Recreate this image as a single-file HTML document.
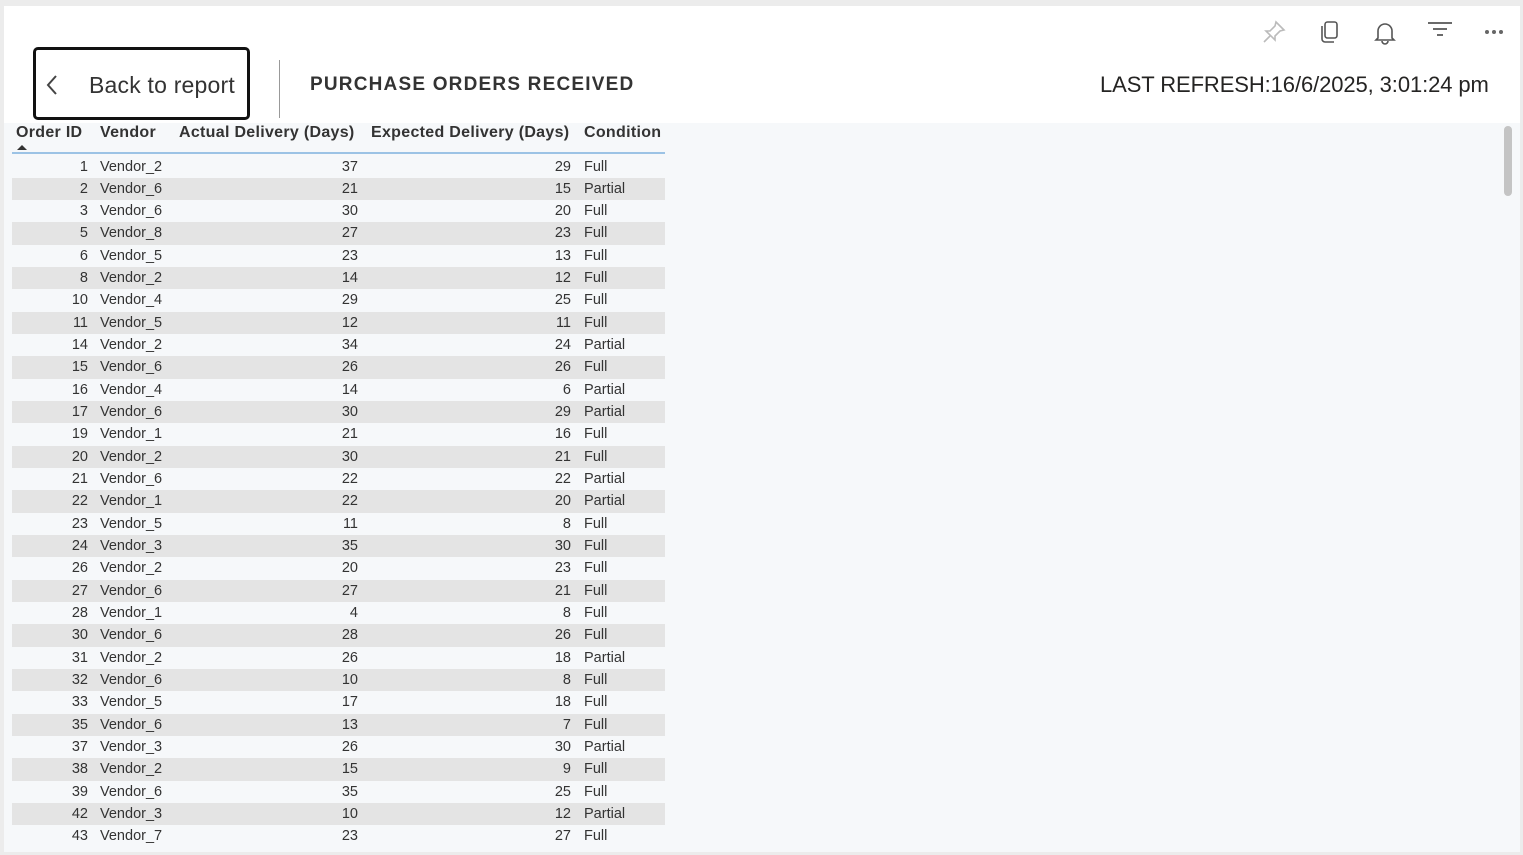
<!DOCTYPE html>
<html><head><meta charset="utf-8"><style>
*{margin:0;padding:0;box-sizing:border-box}
body{width:1523px;height:855px;background:#ececec;position:relative;overflow:hidden;font-family:"Liberation Sans",sans-serif;color:#252423}
#page{position:absolute;left:4px;top:6px;width:1516px;height:846px;background:#fff}
#tbl{position:absolute;left:4px;top:123px;width:1516px;height:729px;background:#f6f8fa}
.btn{position:absolute;left:33px;top:47px;width:217px;height:73px;border:3px solid #111;border-radius:5px;background:#fff}
.btn span{position:absolute;left:53px;top:22px;font-size:23px;color:#333;letter-spacing:0.2px}
.btn svg{position:absolute;left:9px;top:24px}
.sep{position:absolute;left:279px;top:60px;width:1px;height:58px;background:#999}
.title{position:absolute;left:310px;top:74px;font-size:19px;font-weight:bold;letter-spacing:1.2px;color:#333}
.refresh{position:absolute;left:1100px;top:72px;font-size:22px;color:#252423;letter-spacing:-0.1px}
.icons svg{position:absolute;top:18px}
.hdr{position:absolute;top:124px;font-size:16px;font-weight:bold;color:#333;white-space:nowrap;letter-spacing:0.3px}
.hline{position:absolute;left:12px;top:152px;width:653px;height:2px;background:#9cc3e5}
.row{position:absolute;left:12px;width:653px;height:22.33px;font-size:14.5px;color:#333}
.row.g{background:#e4e4e4}
.row div{position:absolute;top:3px;white-space:nowrap}
.c1{right:577px}.c2{left:88px}.c3{right:307px}.c4{right:94px}.c5{left:572px}
.scroll{position:absolute;left:1504px;top:126px;width:8px;height:70px;background:#c4c4c4;border-radius:4px}
</style></head><body>
<div id="page"></div>
<div id="tbl"></div>
<div class="btn"><svg width="14" height="22" viewBox="0 0 14 22"><path d="M11 2 L3 11 L11 20" fill="none" stroke="#444" stroke-width="2"/></svg><span>Back to report</span></div>
<div class="sep"></div>
<div class="title">PURCHASE ORDERS RECEIVED</div>
<div class="refresh">LAST REFRESH:16/6/2025, 3:01:24 pm</div>
<div class="icons">
<svg style="left:1260px" width="28" height="28" viewBox="0 0 28 28" fill="none" stroke="#bbb" stroke-width="1.6"><path d="M16 4 L24 12 L20 13 L15 18 L15 22 L6 13 L10 13 L15 8 Z"/><path d="M10 18 L4 24"/></svg>
<svg style="left:1316px" width="28" height="28" viewBox="0 0 28 28" fill="none" stroke="#555" stroke-width="1.6"><rect x="9" y="4" width="12" height="16" rx="2.5"/><path d="M6 8 V21 a3 3 0 0 0 3 3 H18"/></svg>
<svg style="left:1371px" width="28" height="28" viewBox="0 0 28 28" fill="none" stroke="#555" stroke-width="1.6"><path d="M7 20 V13 a7 7 0 0 1 14 0 V20 L23 22 H5 Z"/><path d="M11 23 a3 3 0 0 0 6 0"/></svg>
<svg style="left:1426px" width="28" height="28" viewBox="0 0 28 28" fill="none" stroke="#555" stroke-width="1.8"><path d="M2 5 H26 M7 11 H21 M11 17 H17"/></svg>
<svg style="left:1482px" width="28" height="28" viewBox="0 0 28 28" fill="#666"><circle cx="5" cy="14" r="2"/><circle cx="12" cy="14" r="2"/><circle cx="19" cy="14" r="2"/></svg>
</div>
<div class="hdr" style="left:16px">Order ID</div>
<div class="hdr" style="left:100px">Vendor</div>
<div class="hdr" style="left:179px">Actual Delivery (Days)</div>
<div class="hdr" style="left:371px">Expected Delivery (Days)</div>
<div class="hdr" style="left:584px">Condition</div>
<svg style="position:absolute;left:17px;top:145px" width="10" height="6"><path d="M0 5 L5 0 L10 5Z" fill="#333"/></svg>
<div class="hline"></div>
<div id="rows"></div>
<div class="scroll"></div>
<script>
var d=[[1,2,37,29,'Full'],[2,6,21,15,'Partial'],[3,6,30,20,'Full'],[5,8,27,23,'Full'],[6,5,23,13,'Full'],[8,2,14,12,'Full'],[10,4,29,25,'Full'],[11,5,12,11,'Full'],[14,2,34,24,'Partial'],[15,6,26,26,'Full'],[16,4,14,6,'Partial'],[17,6,30,29,'Partial'],[19,1,21,16,'Full'],[20,2,30,21,'Full'],[21,6,22,22,'Partial'],[22,1,22,20,'Partial'],[23,5,11,8,'Full'],[24,3,35,30,'Full'],[26,2,20,23,'Full'],[27,6,27,21,'Full'],[28,1,4,8,'Full'],[30,6,28,26,'Full'],[31,2,26,18,'Partial'],[32,6,10,8,'Full'],[33,5,17,18,'Full'],[35,6,13,7,'Full'],[37,3,26,30,'Partial'],[38,2,15,9,'Full'],[39,6,35,25,'Full'],[42,3,10,12,'Partial'],[43,7,23,27,'Full']];
var h='';d.forEach(function(r,i){h+='<div class="row'+(i%2?' g':'')+'" style="top:'+(155.5+i*22.33)+'px"><div class="c1">'+r[0]+'</div><div class="c2">Vendor_'+r[1]+'</div><div class="c3">'+r[2]+'</div><div class="c4">'+r[3]+'</div><div class="c5">'+r[4]+'</div></div>'});
document.getElementById('rows').innerHTML=h;
</script>
</body></html>
